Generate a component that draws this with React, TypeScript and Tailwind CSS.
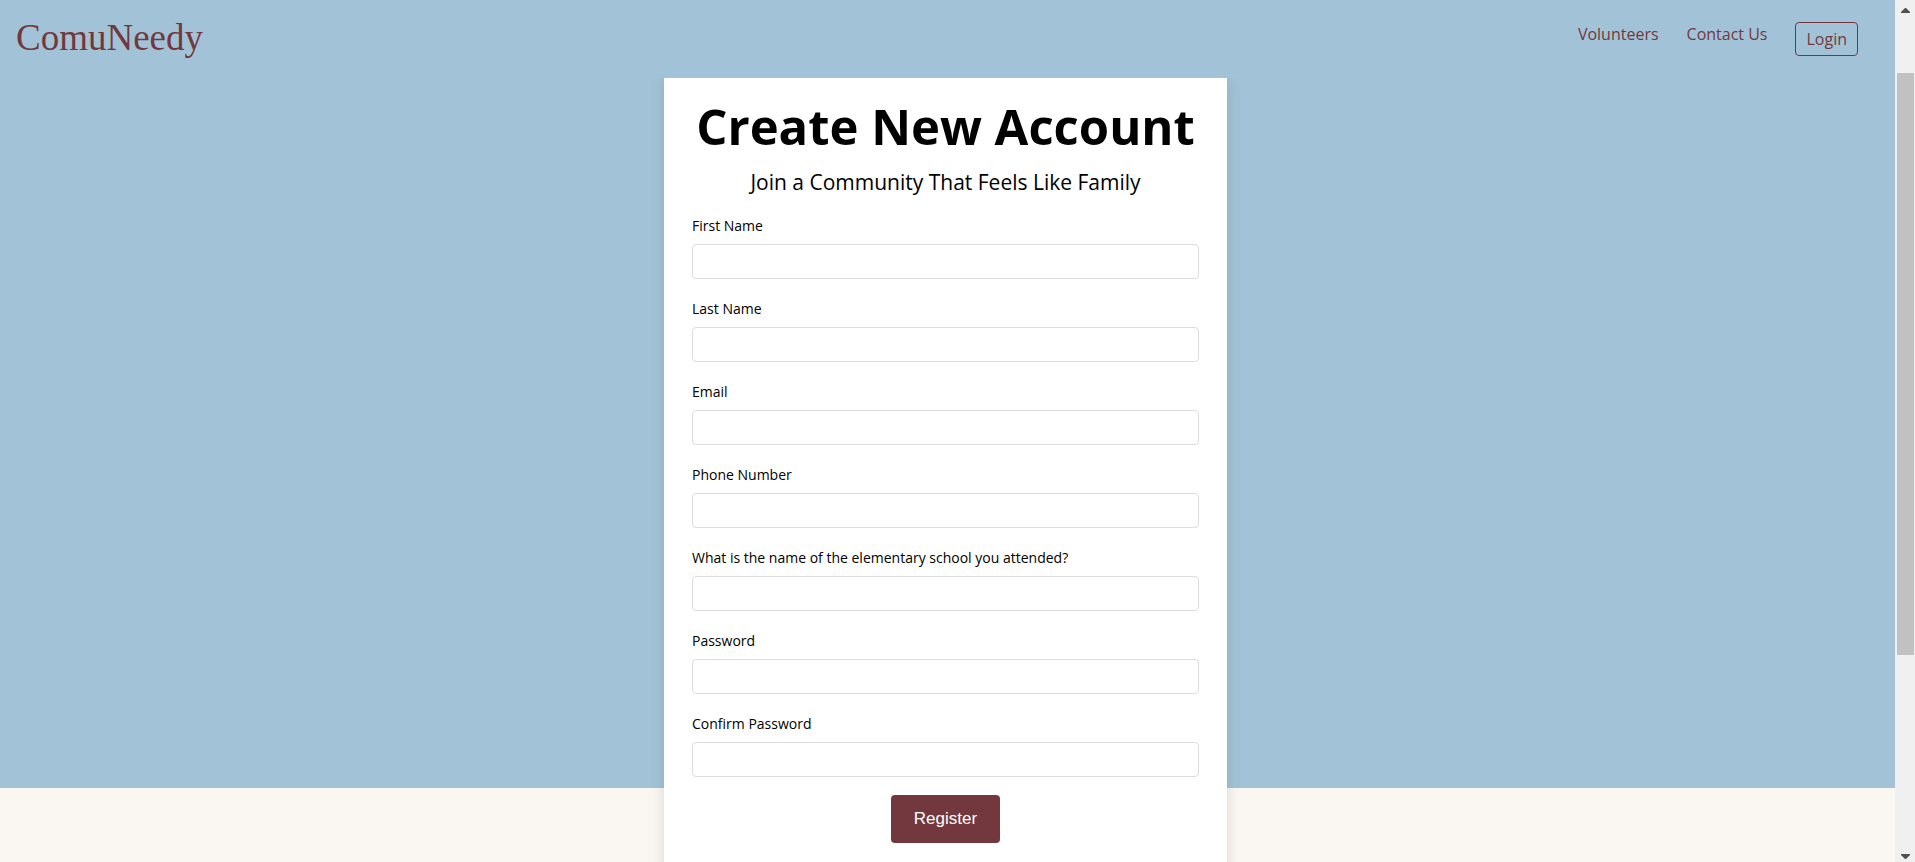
const fields = [
  { id: 'firstName', label: 'First Name', type: 'text' },
  { id: 'lastName', label: 'Last Name', type: 'text' },
  { id: 'email', label: 'Email', type: 'email' },
  { id: 'phone', label: 'Phone Number', type: 'tel' },
  { id: 'school', label: 'What is the name of the elementary school you attended?', type: 'text' },
  { id: 'password', label: 'Password', type: 'password' },
  { id: 'confirmPassword', label: 'Confirm Password', type: 'password' },
];

function Navbar() {
  return (
    <header className="relative z-10 flex h-[78px] items-start justify-between bg-[#a2c3d7] pl-4 pr-[37px] text-[#73383e]">
      <a href="#home" className="pt-4 font-['Liberation_Serif',serif] text-[37px] leading-[44px]">
        ComuNeedy
      </a>
      <nav className="flex items-start gap-7 pt-[22px] text-[16px] leading-6">
        <a href="#volunteers">Volunteers</a>
        <a href="#contact">Contact Us</a>
        <a href="#login" className="rounded border border-[#73383e] px-[10px] py-1">
          Login
        </a>
      </nav>
    </header>
  );
}

function RegisterForm() {
  return (
    <form className="mx-auto flex w-full max-w-[563px] flex-col items-center bg-white px-7 pt-4 pb-10 text-black shadow-[0_0_14px_rgba(0,0,0,0.12)]">
      <h1 className="text-[49px] leading-[64px] font-bold whitespace-nowrap">Create New Account</h1>
      <p className="pt-2 pb-[18px] text-[21px] leading-8">Join a Community That Feels Like Family</p>
      <div className="flex w-full flex-col gap-5">
        {fields.map((field) => (
          <div key={field.id} className="flex flex-col gap-2">
            <label htmlFor={field.id} className="text-[14px] leading-5">
              {field.label}
            </label>
            <input
              id={field.id}
              type={field.type}
              className="h-[35px] w-full rounded border border-[#dddddd] bg-white px-2"
            />
          </div>
        ))}
      </div>
      <button
        type="button"
        className="mt-[18px] h-12 rounded bg-[#73383e] px-[23px] font-['Liberation_Sans',sans-serif] text-[17px] text-white"
      >
        Register
      </button>
    </form>
  );
}

function Scrollbar() {
  return (
    <div aria-hidden="true" className="flex w-5 shrink-0 flex-col items-center bg-[#f0f0f0]">
      <svg width="9" height="5" viewBox="0 0 9 5" className="mt-2 shrink-0 fill-[#505050]">
        <path d="M4 0h1l4 4v1H0V4z" />
      </svg>
      <div className="mt-[60px] h-[582px] w-[17px] shrink-0 bg-[#c1c1c1]" />
      <svg width="9" height="5" viewBox="0 0 9 5" className="mt-auto mb-[3px] shrink-0 fill-[#505050]">
        <path d="M0 0h9v1L5 5H4L0 1z" />
      </svg>
    </div>
  );
}

export default function App() {
  return (
    <div className="flex h-screen overflow-hidden font-['Open_Sans',sans-serif]">
      <div className="h-full min-w-0 grow overflow-hidden bg-[linear-gradient(#a2c3d7_calc(100vh-74px),#faf6f1_calc(100vh-74px))]">
        <Navbar />
        <main className="pr-1">
          <RegisterForm />
        </main>
      </div>
      <Scrollbar />
    </div>
  );
}
